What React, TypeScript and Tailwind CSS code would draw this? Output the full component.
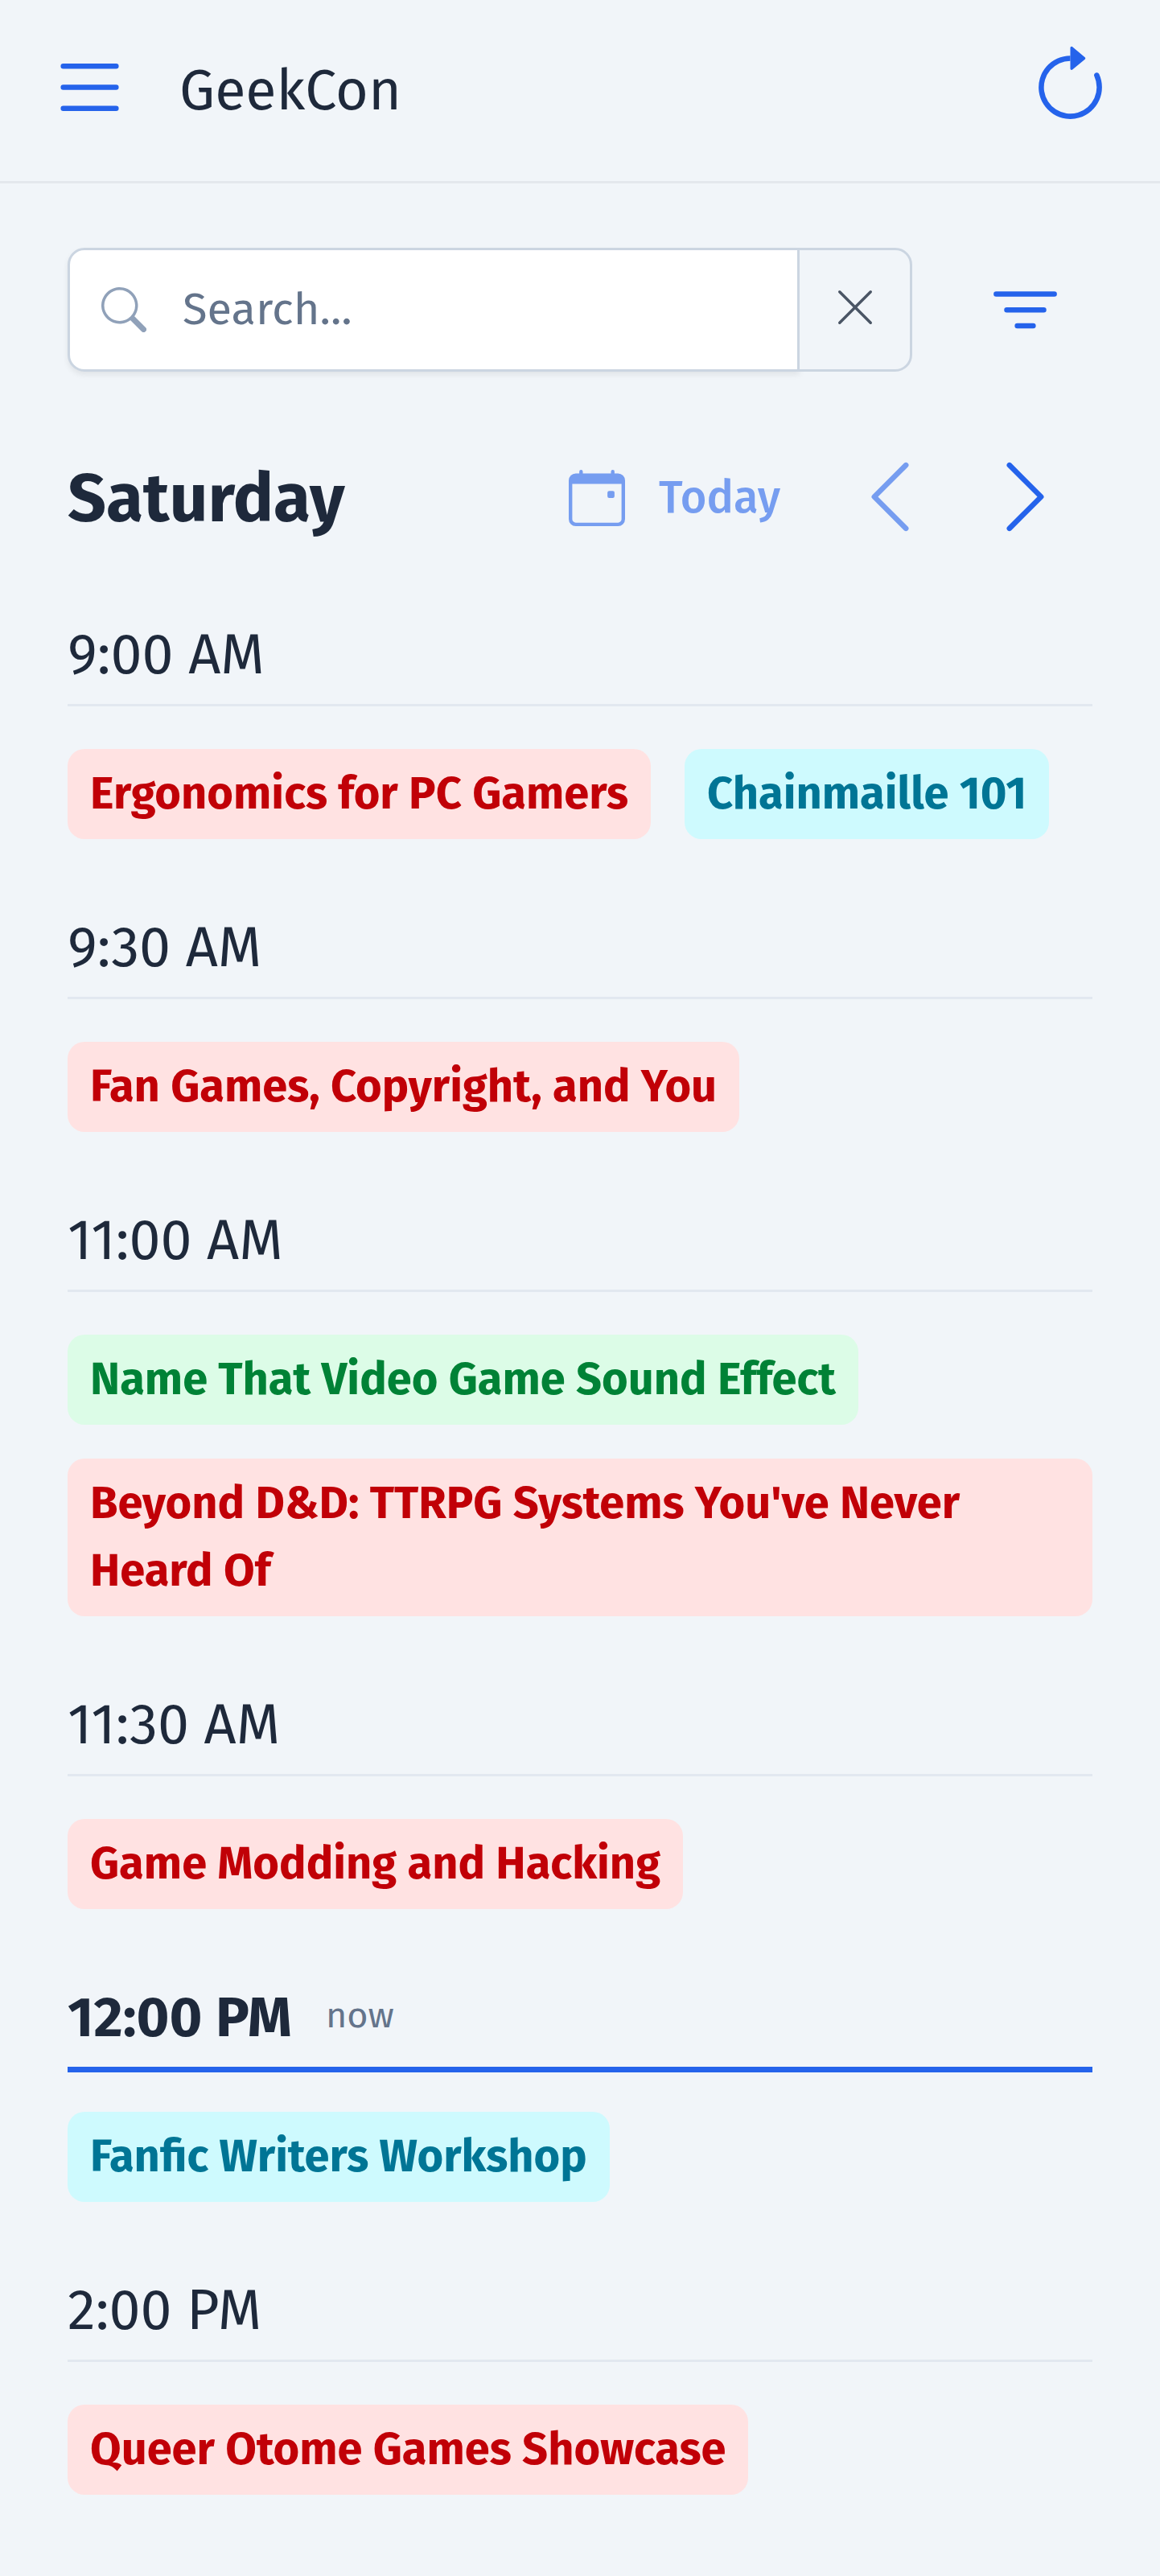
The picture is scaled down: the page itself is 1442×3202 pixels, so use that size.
import {
  BsArrowClockwise,
  BsCalendarEvent,
  BsChevronLeft,
  BsChevronRight,
  BsFilter,
  BsList,
  BsSearch,
  BsXLg,
} from "react-icons/bs";

type Tone = "red" | "cyan" | "green";

interface Session {
  title: string;
  tone: Tone;
}

interface Slot {
  time: string;
  now?: boolean;
  sessions: Session[];
}

const tones: Record<Tone, string> = {
  red: "bg-[#ffe2e2] text-[#c10007]",
  cyan: "bg-[#cefafe] text-[#007595]",
  green: "bg-[#dcfce7] text-[#008236]",
};

const slots: Slot[] = [
  {
    time: "9:00 AM",
    sessions: [
      { title: "Ergonomics for PC Gamers", tone: "red" },
      { title: "Chainmaille 101", tone: "cyan" },
    ],
  },
  { time: "9:30 AM", sessions: [{ title: "Fan Games, Copyright, and You", tone: "red" }] },
  {
    time: "11:00 AM",
    sessions: [
      { title: "Name That Video Game Sound Effect", tone: "green" },
      { title: "Beyond D&D: TTRPG Systems You've Never Heard Of", tone: "red" },
    ],
  },
  { time: "11:30 AM", sessions: [{ title: "Game Modding and Hacking", tone: "red" }] },
  { time: "12:00 PM", now: true, sessions: [{ title: "Fanfic Writers Workshop", tone: "cyan" }] },
  { time: "2:00 PM", sessions: [{ title: "Queer Otome Games Showcase", tone: "red" }] },
];

function Header() {
  return (
    <header className="flex h-[228px] items-start border-b-[3px] border-[#e4e8ed] px-[59px] pt-14">
      <button className="text-[#2563eb]" aria-label="Menu">
        <BsList className="size-[105px]" />
      </button>
      <h1 className="ml-[59px] pt-2 text-[70px] leading-[98px]">GeekCon</h1>
      <button className="ml-auto text-[#2563eb]" aria-label="Refresh">
        <BsArrowClockwise className="size-[105px]" />
      </button>
    </header>
  );
}

function SearchBar() {
  return (
    <div className="flex items-center justify-between pr-[31px]">
      <div className="flex h-[154px] w-[1050px]">
        <div className="flex flex-1 items-center rounded-l-[21px] border-[3px] border-[#cbd5e1] bg-white pl-[39px] shadow-[0_4px_7px_rgba(0,0,0,0.07)]">
          <BsSearch className="size-14 text-[#90a1b9]" />
          <span className="ml-[45px] text-[56px] leading-[84px] text-[#64748b]">Search...</span>
        </div>
        <button
          className="relative -ml-[3px] flex w-[143px] items-center justify-center rounded-r-[21px] border-[3px] border-[#cbd5e1] bg-[#f1f5f9] pb-1.5 text-[#4a5565]"
          aria-label="Clear search"
        >
          <BsXLg className="size-14" />
        </button>
      </div>
      <button className="pt-[7px] text-[#2563eb]" aria-label="Filter">
        <BsFilter className="size-[105px]" />
      </button>
    </div>
  );
}

function DayNav() {
  return (
    <div className="mt-[102px] mb-[95px] flex h-[106px] items-center pr-[31px]">
      <h2 className="pt-[5px] text-[84px] leading-[100px] font-bold">Saturday</h2>
      <button className="ml-auto flex items-center gap-[42px] pt-1 text-[#2563eb] opacity-60">
        <BsCalendarEvent className="size-[70px]" />
        <span className="text-[56px] leading-[84px] font-medium">Today</span>
      </button>
      <button className="ml-[84px] text-[#2563eb] opacity-60" aria-label="Previous day">
        <BsChevronLeft className="size-[105px]" />
      </button>
      <button className="ml-[63px] text-[#2563eb]" aria-label="Next day">
        <BsChevronRight className="size-[105px]" />
      </button>
    </div>
  );
}

function SlotSection({ slot }: { slot: Slot }) {
  return (
    <section>
      <div className="flex h-[110px] items-start">
        <h3
          className={
            slot.now
              ? "text-[70px] leading-[98px] font-bold"
              : "text-[70px] leading-[98px] font-normal"
          }
        >
          {slot.time}
        </h3>
        {slot.now && (
          <span className="ml-[42px] text-[45px] leading-[92px] text-[#64748b]">now</span>
        )}
      </div>
      <div className={slot.now ? "mb-[49px] h-[7px] bg-[#2563eb]" : "mb-[53px] h-[3px] bg-[#e2e8f0]"} />
      <ul className="flex flex-wrap gap-[42px]">
        {slot.sessions.map((session) => (
          <li
            key={session.title}
            className={`rounded-[21px] px-7 py-3.5 text-[56px] leading-[84px] font-bold ${tones[session.tone]}`}
          >
            {session.title}
          </li>
        ))}
      </ul>
    </section>
  );
}

export default function App() {
  return (
    <div className="min-h-[3202px] bg-[#f1f5f9] font-['Fira_Sans','Noto_Sans',sans-serif] text-[#1e293b]">
      <Header />
      <main className="px-[84px] pt-20">
        <SearchBar />
        <DayNav />
        <div className="flex flex-col gap-[86px]">
          {slots.map((slot) => (
            <SlotSection key={slot.time} slot={slot} />
          ))}
        </div>
      </main>
    </div>
  );
}
